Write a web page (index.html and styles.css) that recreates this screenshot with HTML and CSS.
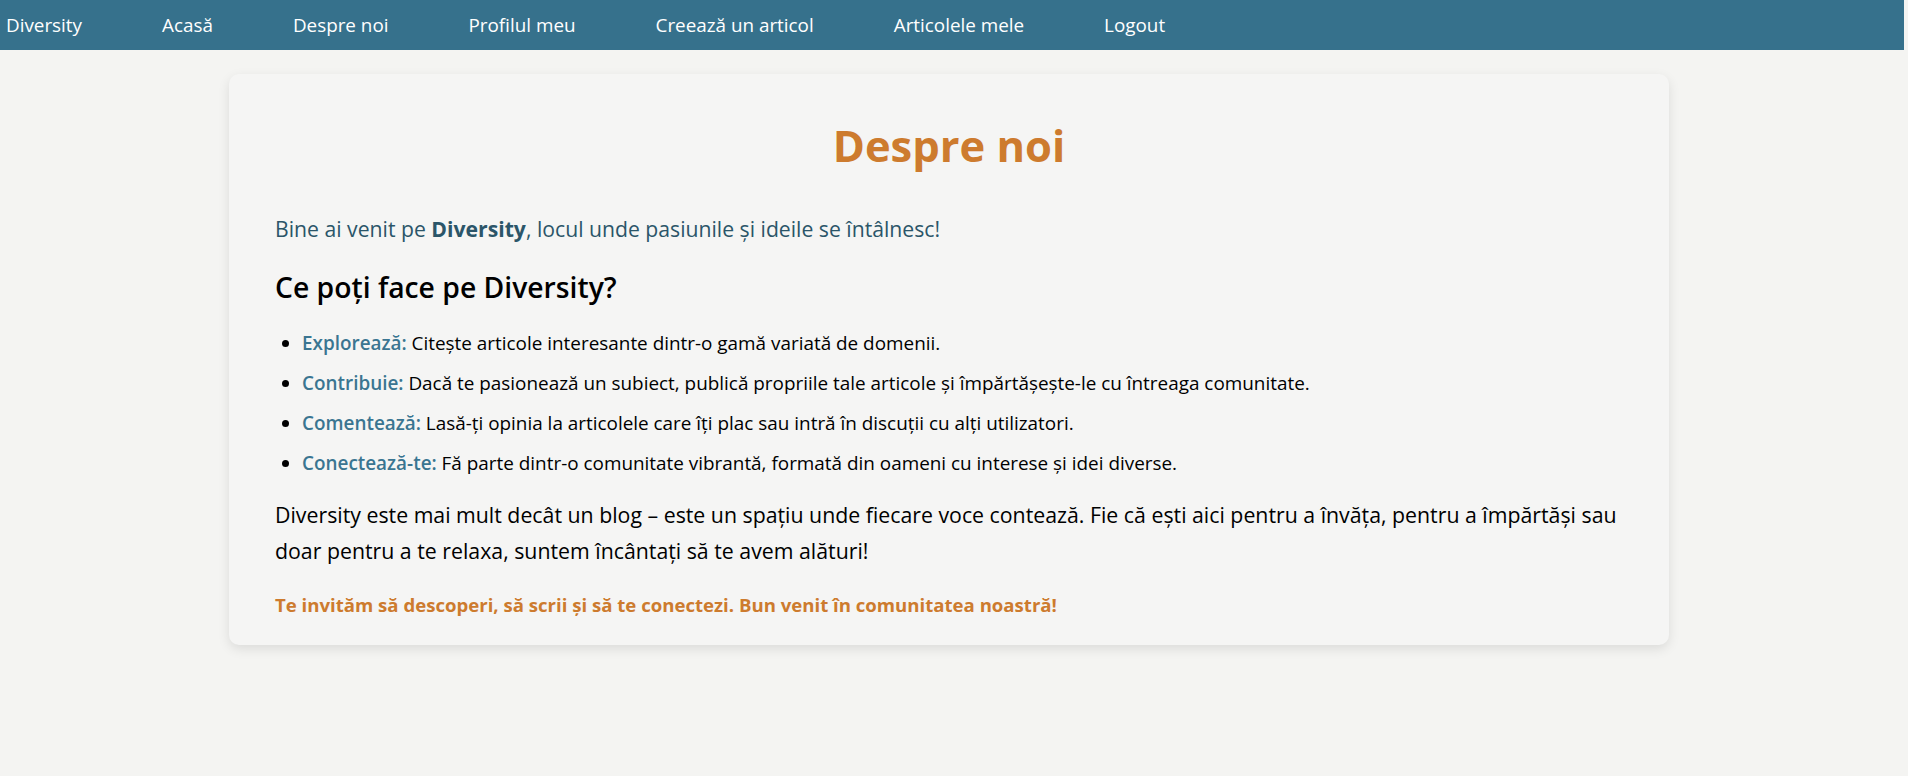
FILE: index.html
```html
<!DOCTYPE html>
<html lang="ro">
<head>
<meta charset="utf-8">
<title>Despre noi - Diversity</title>
<link rel="stylesheet" href="styles.css">
</head>
<body>
<nav class="navbar">
  <a class="nav-link" href="#">Diversity</a>
  <a class="nav-link" href="#">Acasă</a>
  <a class="nav-link" href="#">Despre noi</a>
  <a class="nav-link" href="#">Profilul meu</a>
  <a class="nav-link" href="#">Creează un articol</a>
  <a class="nav-link" href="#">Articolele mele</a>
  <a class="nav-link" href="#">Logout</a>
</nav>
<main class="main">
  <section class="card">
    <h1 class="title">Despre noi</h1>
    <p class="intro">Bine ai venit pe <strong>Diversity</strong>, locul unde pasiunile și ideile se întâlnesc!</p>
    <h2 class="subtitle">Ce poți face pe Diversity?</h2>
    <ul class="features">
      <li><span class="label">Explorează:</span> Citește articole interesante dintr-o gamă variată de domenii.</li>
      <li><span class="label">Contribuie:</span> Dacă te pasionează un subiect, publică propriile tale articole și împărtășește-le cu întreaga comunitate.</li>
      <li><span class="label">Comentează:</span> Lasă-ți opinia la articolele care îți plac sau intră în discuții cu alți utilizatori.</li>
      <li><span class="label">Conectează-te:</span> Fă parte dintr-o comunitate vibrantă, formată din oameni cu interese și idei diverse.</li>
    </ul>
    <p class="body-text">Diversity este mai mult decât un blog – este un spațiu unde fiecare voce contează. Fie că ești aici pentru a învăța, pentru a împărtăși sau doar pentru a te relaxa, suntem încântați să te avem alături!</p>
    <p class="closing">Te invităm să descoperi, să scrii și să te conectezi. Bun venit în comunitatea noastră!</p>
  </section>
</main>
</body>
</html>
```
FILE: styles.css
```css
html, body {
  margin: 0;
  padding: 0;
}
body {
  background: #f4f4f2;
  font-family: "Open Sans", "Noto Sans", sans-serif;
  color: #000;
  min-height: 776px;
  padding-right: 4px;
  box-sizing: border-box;
}
.navbar {
  display: flex;
  align-items: center;
  gap: 80px;
  height: 50px;
  padding-left: 6px;
  background: #36718c;
}
.nav-link {
  color: #fff;
  text-decoration: none;
  font-size: 18.85px;
  line-height: 24px;
}
.main {
  padding-top: 24px;
  padding-right: 6px;
}
.card {
  width: 1440px;
  box-sizing: border-box;
  margin: 0 auto;
  padding: 40px 46px 26px;
  background: #f5f5f4;
  border-radius: 10px;
  box-shadow: 0 4px 12px rgba(0, 0, 0, 0.1);
}
.title {
  margin: 0;
  text-align: center;
  font-size: 43.5px;
  line-height: 64px;
  font-weight: 700;
  color: #cd7b2e;
}
.intro {
  margin: 36px 0 0;
  font-size: 21.2px;
  line-height: 30px;
  color: #2b5569;
}
.intro strong {
  font-weight: 700;
}
.subtitle {
  margin: 25px 0 0;
  font-size: 28.3px;
  line-height: 36px;
  font-weight: 600;
}
.features {
  margin: 23px 0 0;
  padding-left: 27px;
}
.features li {
  font-size: 18.9px;
  line-height: 30px;
  margin-bottom: 10px;
}
.features li:last-child {
  margin-bottom: 0;
}
.label {
  font-weight: 600;
  color: #3a7591;
}
.body-text {
  margin: 19px 0 0;
  font-size: 21.3px;
  line-height: 36px;
}
.closing {
  margin: 22px 0 0;
  font-size: 18.6px;
  line-height: 28px;
  font-weight: 700;
  color: #cd7b2e;
}
```
